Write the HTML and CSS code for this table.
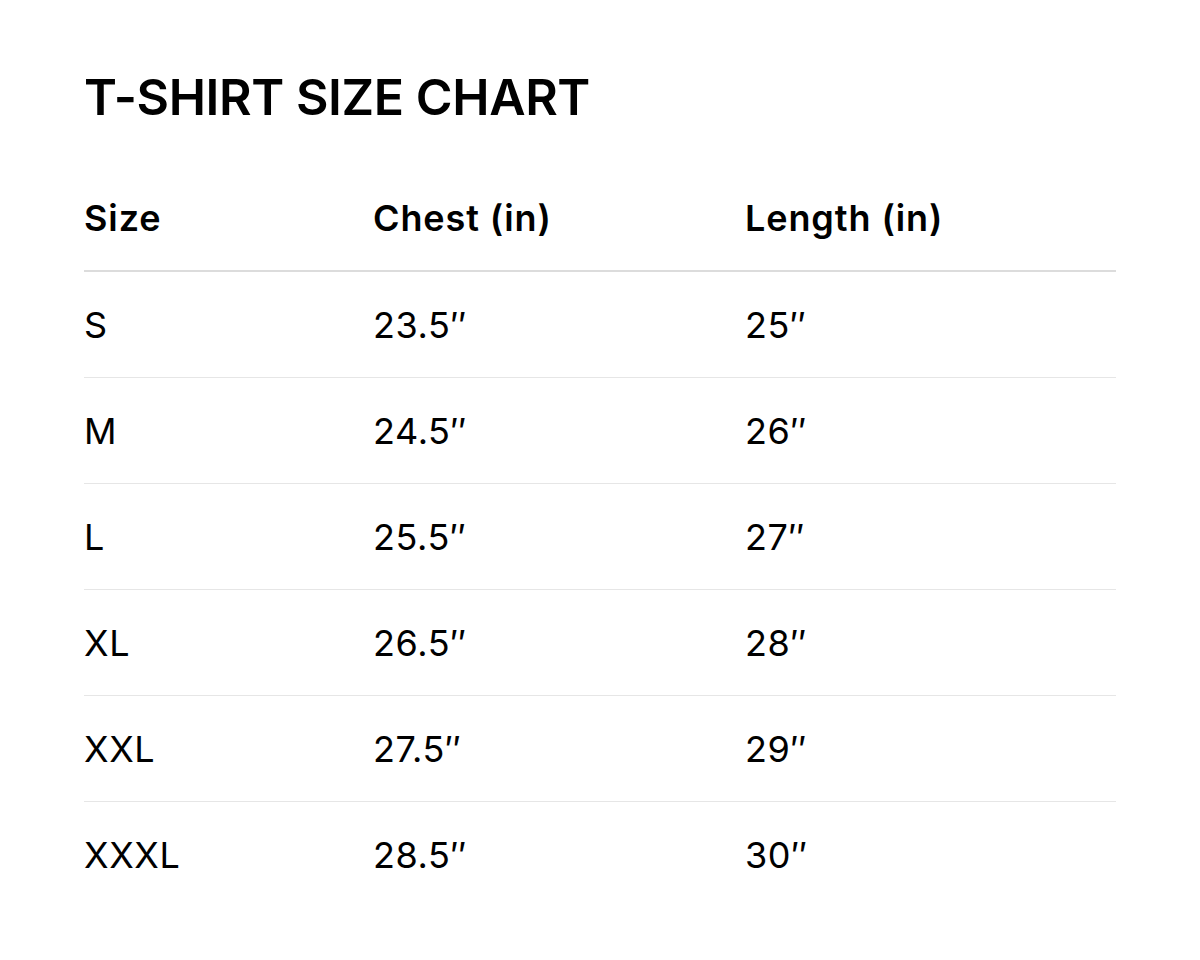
FILE: index.html
```html
<!DOCTYPE html>
<html lang="en">
<head>
<meta charset="utf-8">
<title>T-Shirt Size Chart</title>
<link rel="stylesheet" href="styles.css">
</head>
<body>
<main class="page">
  <h1 class="title">T-SHIRT SIZE CHART</h1>
  <table class="chart">
    <thead>
      <tr><th class="c1">Size</th><th class="c2">Chest (in)</th><th class="c3">Length (in)</th></tr>
    </thead>
    <tbody>
      <tr><td>S</td><td>23.5″</td><td>25″</td></tr>
      <tr><td>M</td><td>24.5″</td><td>26″</td></tr>
      <tr><td>L</td><td>25.5″</td><td>27″</td></tr>
      <tr><td>XL</td><td>26.5″</td><td>28″</td></tr>
      <tr><td>XXL</td><td>27.5″</td><td>29″</td></tr>
      <tr><td>XXXL</td><td>28.5″</td><td>30″</td></tr>
    </tbody>
  </table>
</main>
</body>
</html>
```

FILE: styles.css
```css
html, body {
  margin: 0;
  padding: 0;
  background: #ffffff;
}
body {
  font-family: Inter, "Liberation Sans", sans-serif;
  color: #000000;
}
.page {
  padding: 66px 84px 0 84px;
}
.title {
  margin: 0;
  font-size: 50px;
  font-weight: 600;
  line-height: 62px;
  letter-spacing: -0.4px;
}
.chart {
  margin-top: 38px;
  width: 1032px;
  border-collapse: collapse;
  table-layout: fixed;
}
.chart th, .chart td {
  text-align: left;
  padding: 0;
  height: 105px;
  vertical-align: middle;
  font-size: 36px;
}
.chart th {
  font-weight: 600;
  letter-spacing: 0.9px;
  border-bottom: 2px solid #dcdcdc;
  height: 104px;
}
.chart td {
  font-weight: 400;
  letter-spacing: 0.6px;
  border-bottom: 1px solid #e6e6e6;
}
.chart tbody tr:last-child td {
  border-bottom: none;
}
.c1 { width: 289px; }
.c2 { width: 372px; }
.c3 { width: 371px; }
```
